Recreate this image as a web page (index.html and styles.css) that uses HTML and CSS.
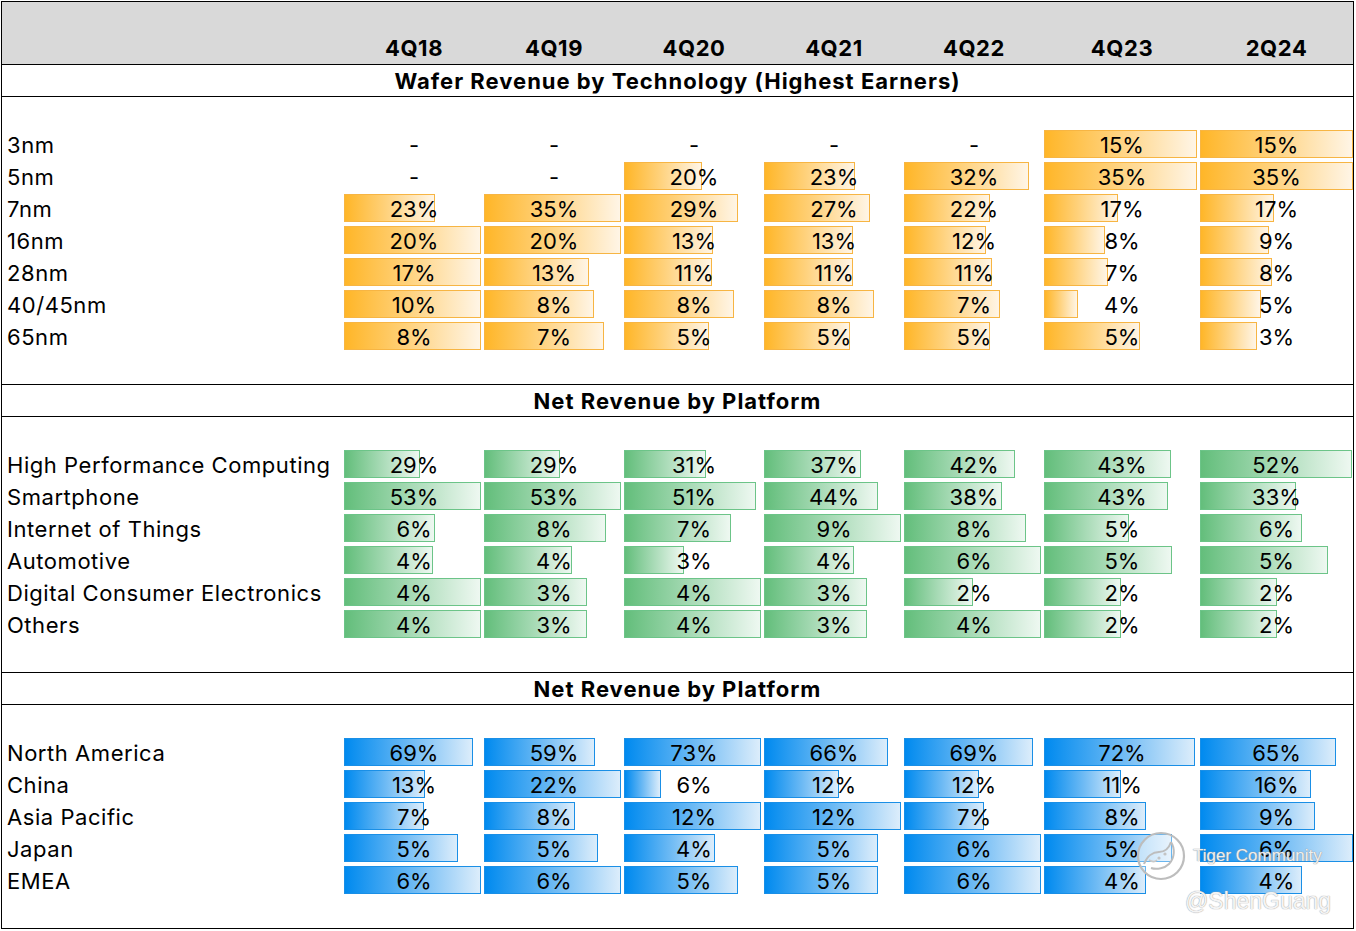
FILE: index.html
```html
<!DOCTYPE html>
<html>
<head>
<meta charset="utf-8">
<title>TSMC Revenue Mix</title>
<link rel="stylesheet" href="styles.css">
</head>
<body>
<div class="sheet">
  <div class="head">
    <div></div>
    <div class="hcell">4Q18</div><div class="hcell">4Q19</div><div class="hcell">4Q20</div><div class="hcell">4Q21</div><div class="hcell">4Q22</div><div class="hcell">4Q23</div><div class="hcell">2Q24</div>
  </div>

  <section class="section orange">
    <div class="title">Wafer Revenue by Technology (Highest Earners)</div>
    <div class="body">
      <div class="row"><div class="label">3nm</div>
        <div class="cell"><span class="val">-</span></div>
        <div class="cell"><span class="val">-</span></div>
        <div class="cell"><span class="val">-</span></div>
        <div class="cell"><span class="val">-</span></div>
        <div class="cell"><span class="val">-</span></div>
        <div class="cell"><span class="bar" style="width:153px"></span><span class="val">15%</span></div>
        <div class="cell"><span class="bar" style="width:153px"></span><span class="val">15%</span></div>
      </div>
      <div class="row"><div class="label">5nm</div>
        <div class="cell"><span class="val">-</span></div>
        <div class="cell"><span class="val">-</span></div>
        <div class="cell"><span class="bar" style="width:78px"></span><span class="val">20%</span></div>
        <div class="cell"><span class="bar" style="width:91px"></span><span class="val">23%</span></div>
        <div class="cell"><span class="bar" style="width:125px"></span><span class="val">32%</span></div>
        <div class="cell"><span class="bar" style="width:153px"></span><span class="val">35%</span></div>
        <div class="cell"><span class="bar" style="width:153px"></span><span class="val">35%</span></div>
      </div>
      <div class="row"><div class="label">7nm</div>
        <div class="cell"><span class="bar" style="width:91px"></span><span class="val">23%</span></div>
        <div class="cell"><span class="bar" style="width:137px"></span><span class="val">35%</span></div>
        <div class="cell"><span class="bar" style="width:114px"></span><span class="val">29%</span></div>
        <div class="cell"><span class="bar" style="width:106px"></span><span class="val">27%</span></div>
        <div class="cell"><span class="bar" style="width:86px"></span><span class="val">22%</span></div>
        <div class="cell"><span class="bar" style="width:74px"></span><span class="val">17%</span></div>
        <div class="cell"><span class="bar" style="width:74px"></span><span class="val">17%</span></div>
      </div>
      <div class="row"><div class="label">16nm</div>
        <div class="cell"><span class="bar" style="width:137px"></span><span class="val">20%</span></div>
        <div class="cell"><span class="bar" style="width:137px"></span><span class="val">20%</span></div>
        <div class="cell"><span class="bar" style="width:89px"></span><span class="val">13%</span></div>
        <div class="cell"><span class="bar" style="width:89px"></span><span class="val">13%</span></div>
        <div class="cell"><span class="bar" style="width:82px"></span><span class="val">12%</span></div>
        <div class="cell"><span class="bar" style="width:61px"></span><span class="val">8%</span></div>
        <div class="cell"><span class="bar" style="width:69px"></span><span class="val">9%</span></div>
      </div>
      <div class="row"><div class="label">28nm</div>
        <div class="cell"><span class="bar" style="width:137px"></span><span class="val">17%</span></div>
        <div class="cell"><span class="bar" style="width:105px"></span><span class="val">13%</span></div>
        <div class="cell"><span class="bar" style="width:88px"></span><span class="val">11%</span></div>
        <div class="cell"><span class="bar" style="width:89px"></span><span class="val">11%</span></div>
        <div class="cell"><span class="bar" style="width:88px"></span><span class="val">11%</span></div>
        <div class="cell"><span class="bar" style="width:64px"></span><span class="val">7%</span></div>
        <div class="cell"><span class="bar" style="width:72px"></span><span class="val">8%</span></div>
      </div>
      <div class="row"><div class="label">40/45nm</div>
        <div class="cell"><span class="bar" style="width:137px"></span><span class="val">10%</span></div>
        <div class="cell"><span class="bar" style="width:110px"></span><span class="val">8%</span></div>
        <div class="cell"><span class="bar" style="width:110px"></span><span class="val">8%</span></div>
        <div class="cell"><span class="bar" style="width:110px"></span><span class="val">8%</span></div>
        <div class="cell"><span class="bar" style="width:96px"></span><span class="val">7%</span></div>
        <div class="cell"><span class="bar" style="width:34px"></span><span class="val">4%</span></div>
        <div class="cell"><span class="bar" style="width:61px"></span><span class="val">5%</span></div>
      </div>
      <div class="row"><div class="label">65nm</div>
        <div class="cell"><span class="bar" style="width:137px"></span><span class="val">8%</span></div>
        <div class="cell"><span class="bar" style="width:120px"></span><span class="val">7%</span></div>
        <div class="cell"><span class="bar" style="width:85px"></span><span class="val">5%</span></div>
        <div class="cell"><span class="bar" style="width:86px"></span><span class="val">5%</span></div>
        <div class="cell"><span class="bar" style="width:86px"></span><span class="val">5%</span></div>
        <div class="cell"><span class="bar" style="width:96px"></span><span class="val">5%</span></div>
        <div class="cell"><span class="bar" style="width:57px"></span><span class="val">3%</span></div>
      </div>
    </div>
  </section>

  <section class="section green">
    <div class="title">Net Revenue by Platform</div>
    <div class="body">
      <div class="row"><div class="label">High Performance Computing</div>
        <div class="cell"><span class="bar" style="width:76px"></span><span class="val">29%</span></div>
        <div class="cell"><span class="bar" style="width:76px"></span><span class="val">29%</span></div>
        <div class="cell"><span class="bar" style="width:82px"></span><span class="val">31%</span></div>
        <div class="cell"><span class="bar" style="width:97px"></span><span class="val">37%</span></div>
        <div class="cell"><span class="bar" style="width:111px"></span><span class="val">42%</span></div>
        <div class="cell"><span class="bar" style="width:127px"></span><span class="val">43%</span></div>
        <div class="cell"><span class="bar" style="width:152px"></span><span class="val">52%</span></div>
      </div>
      <div class="row"><div class="label">Smartphone</div>
        <div class="cell"><span class="bar" style="width:137px"></span><span class="val">53%</span></div>
        <div class="cell"><span class="bar" style="width:137px"></span><span class="val">53%</span></div>
        <div class="cell"><span class="bar" style="width:132px"></span><span class="val">51%</span></div>
        <div class="cell"><span class="bar" style="width:114px"></span><span class="val">44%</span></div>
        <div class="cell"><span class="bar" style="width:98px"></span><span class="val">38%</span></div>
        <div class="cell"><span class="bar" style="width:124px"></span><span class="val">43%</span></div>
        <div class="cell"><span class="bar" style="width:96px"></span><span class="val">33%</span></div>
      </div>
      <div class="row"><div class="label">Internet of Things</div>
        <div class="cell"><span class="bar" style="width:91px"></span><span class="val">6%</span></div>
        <div class="cell"><span class="bar" style="width:122px"></span><span class="val">8%</span></div>
        <div class="cell"><span class="bar" style="width:107px"></span><span class="val">7%</span></div>
        <div class="cell"><span class="bar" style="width:137px"></span><span class="val">9%</span></div>
        <div class="cell"><span class="bar" style="width:122px"></span><span class="val">8%</span></div>
        <div class="cell"><span class="bar" style="width:85px"></span><span class="val">5%</span></div>
        <div class="cell"><span class="bar" style="width:102px"></span><span class="val">6%</span></div>
      </div>
      <div class="row"><div class="label">Automotive</div>
        <div class="cell"><span class="bar" style="width:89px"></span><span class="val">4%</span></div>
        <div class="cell"><span class="bar" style="width:88px"></span><span class="val">4%</span></div>
        <div class="cell"><span class="bar" style="width:60px"></span><span class="val">3%</span></div>
        <div class="cell"><span class="bar" style="width:90px"></span><span class="val">4%</span></div>
        <div class="cell"><span class="bar" style="width:137px"></span><span class="val">6%</span></div>
        <div class="cell"><span class="bar" style="width:128px"></span><span class="val">5%</span></div>
        <div class="cell"><span class="bar" style="width:128px"></span><span class="val">5%</span></div>
      </div>
      <div class="row"><div class="label">Digital Consumer Electronics</div>
        <div class="cell"><span class="bar" style="width:137px"></span><span class="val">4%</span></div>
        <div class="cell"><span class="bar" style="width:103px"></span><span class="val">3%</span></div>
        <div class="cell"><span class="bar" style="width:137px"></span><span class="val">4%</span></div>
        <div class="cell"><span class="bar" style="width:103px"></span><span class="val">3%</span></div>
        <div class="cell"><span class="bar" style="width:69px"></span><span class="val">2%</span></div>
        <div class="cell"><span class="bar" style="width:77px"></span><span class="val">2%</span></div>
        <div class="cell"><span class="bar" style="width:77px"></span><span class="val">2%</span></div>
      </div>
      <div class="row"><div class="label">Others</div>
        <div class="cell"><span class="bar" style="width:137px"></span><span class="val">4%</span></div>
        <div class="cell"><span class="bar" style="width:103px"></span><span class="val">3%</span></div>
        <div class="cell"><span class="bar" style="width:137px"></span><span class="val">4%</span></div>
        <div class="cell"><span class="bar" style="width:103px"></span><span class="val">3%</span></div>
        <div class="cell"><span class="bar" style="width:137px"></span><span class="val">4%</span></div>
        <div class="cell"><span class="bar" style="width:77px"></span><span class="val">2%</span></div>
        <div class="cell"><span class="bar" style="width:77px"></span><span class="val">2%</span></div>
      </div>
    </div>
  </section>

  <section class="section blue">
    <div class="title">Net Revenue by Platform</div>
    <div class="body">
      <div class="row"><div class="label">North America</div>
        <div class="cell"><span class="bar" style="width:129px"></span><span class="val">69%</span></div>
        <div class="cell"><span class="bar" style="width:111px"></span><span class="val">59%</span></div>
        <div class="cell"><span class="bar" style="width:137px"></span><span class="val">73%</span></div>
        <div class="cell"><span class="bar" style="width:124px"></span><span class="val">66%</span></div>
        <div class="cell"><span class="bar" style="width:129px"></span><span class="val">69%</span></div>
        <div class="cell"><span class="bar" style="width:151px"></span><span class="val">72%</span></div>
        <div class="cell"><span class="bar" style="width:136px"></span><span class="val">65%</span></div>
      </div>
      <div class="row"><div class="label">China</div>
        <div class="cell"><span class="bar" style="width:81px"></span><span class="val">13%</span></div>
        <div class="cell"><span class="bar" style="width:137px"></span><span class="val">22%</span></div>
        <div class="cell"><span class="bar" style="width:37px"></span><span class="val">6%</span></div>
        <div class="cell"><span class="bar" style="width:75px"></span><span class="val">12%</span></div>
        <div class="cell"><span class="bar" style="width:75px"></span><span class="val">12%</span></div>
        <div class="cell"><span class="bar" style="width:77px"></span><span class="val">11%</span></div>
        <div class="cell"><span class="bar" style="width:111px"></span><span class="val">16%</span></div>
      </div>
      <div class="row"><div class="label">Asia Pacific</div>
        <div class="cell"><span class="bar" style="width:80px"></span><span class="val">7%</span></div>
        <div class="cell"><span class="bar" style="width:91px"></span><span class="val">8%</span></div>
        <div class="cell"><span class="bar" style="width:137px"></span><span class="val">12%</span></div>
        <div class="cell"><span class="bar" style="width:137px"></span><span class="val">12%</span></div>
        <div class="cell"><span class="bar" style="width:80px"></span><span class="val">7%</span></div>
        <div class="cell"><span class="bar" style="width:102px"></span><span class="val">8%</span></div>
        <div class="cell"><span class="bar" style="width:115px"></span><span class="val">9%</span></div>
      </div>
      <div class="row"><div class="label">Japan</div>
        <div class="cell"><span class="bar" style="width:114px"></span><span class="val">5%</span></div>
        <div class="cell"><span class="bar" style="width:114px"></span><span class="val">5%</span></div>
        <div class="cell"><span class="bar" style="width:91px"></span><span class="val">4%</span></div>
        <div class="cell"><span class="bar" style="width:114px"></span><span class="val">5%</span></div>
        <div class="cell"><span class="bar" style="width:137px"></span><span class="val">6%</span></div>
        <div class="cell"><span class="bar" style="width:128px"></span><span class="val">5%</span></div>
        <div class="cell"><span class="bar" style="width:153px"></span><span class="val">6%</span></div>
      </div>
      <div class="row"><div class="label">EMEA</div>
        <div class="cell"><span class="bar" style="width:137px"></span><span class="val">6%</span></div>
        <div class="cell"><span class="bar" style="width:137px"></span><span class="val">6%</span></div>
        <div class="cell"><span class="bar" style="width:114px"></span><span class="val">5%</span></div>
        <div class="cell"><span class="bar" style="width:114px"></span><span class="val">5%</span></div>
        <div class="cell"><span class="bar" style="width:137px"></span><span class="val">6%</span></div>
        <div class="cell"><span class="bar" style="width:102px"></span><span class="val">4%</span></div>
        <div class="cell"><span class="bar" style="width:102px"></span><span class="val">4%</span></div>
      </div>
    </div>
  </section>

  <div class="watermark">
    <svg class="wm-logo" width="52" height="52" viewBox="0 0 52 52">
      <circle cx="26" cy="26" r="23" fill="rgba(255,255,255,0.35)" stroke="#bdbdbd" stroke-width="2.2"/>
      <path d="M9 34 C12 26 18 22 24 22 C30 22 34 18 36 12" fill="none" stroke="#bdbdbd" stroke-width="2"/>
      <path d="M36 12 C40 18 40 28 34 34 C30 38 22 40 16 38" fill="none" stroke="#bdbdbd" stroke-width="2"/>
      <path d="M14 30 C17 32 20 32 22 30" fill="none" stroke="#c8c8c8" stroke-width="1.6"/>
      <circle cx="24" cy="28" r="1.6" fill="#c4c4c4"/>
      <circle cx="30" cy="24" r="1.6" fill="#c4c4c4"/>
    </svg>
    <span class="wm-brand">Tiger Community</span>
    <span class="wm-user">@ShenGuang</span>
  </div>
</div>
</body>
</html>
```
FILE: styles.css
```css
:root {
  --cols: 342px 140px 140px 140px 140px 140px 156px 153px;
}

html, body {
  margin: 0;
  padding: 0;
  background: #ffffff;
}

body {
  font-family: Inter, "Liberation Sans", Arial, sans-serif;
  color: #000000;
}

.sheet {
  position: relative;
  margin: 1px 0 0 1px;
  width: 1353px;
  height: 928px;
  box-sizing: border-box;
  border: 1px solid #000000;
  overflow: hidden;
}

.head {
  height: 63px;
  box-sizing: border-box;
  background: #d9d9d9;
  border-bottom: 1px solid #000000;
  display: grid;
  grid-template-columns: var(--cols);
  align-items: end;
}

.hcell {
  text-align: center;
  font-weight: 700;
  font-size: 22px;
  letter-spacing: 0.6px;
  line-height: 32px;
  padding-top: 2px;
}

.section {
  border-bottom: 1px solid #000000;
}

.section:last-of-type {
  border-bottom: none;
}

.title {
  height: 32px;
  box-sizing: border-box;
  border-bottom: 1px solid #000000;
  text-align: center;
  font-weight: 700;
  font-size: 22px;
  letter-spacing: 1px;
  line-height: 31px;
  padding-top: 1px;
}

.body {
  padding: 32px 0 31px;
}

.row {
  display: grid;
  grid-template-columns: var(--cols);
  height: 32px;
}

.label {
  padding: 0 0 0 5px;
  font-size: 22px;
  letter-spacing: 0.55px;
  line-height: 32px;
  white-space: nowrap;
}

.cell {
  display: grid;
  height: 32px;
}

.bar,
.val {
  grid-area: 1 / 1;
}

.bar {
  justify-self: start;
  align-self: start;
  margin-top: 1px;
  height: 28px;
  box-sizing: border-box;
  border: 1px solid;
}

.val {
  justify-self: center;
  align-self: center;
  font-size: 22px;
  line-height: 32px;
  position: relative;
}

.orange .bar {
  border-color: #f7b543;
  background: linear-gradient(to right, #ffb628 0%, #ffd17a 45%, #fff5e6 100%);
}

.green .bar {
  border-color: #6cc488;
  background: linear-gradient(to right, #63be7b 0%, #a9dbb7 50%, #eef8f1 100%);
}

.blue .bar {
  border-color: #1a8fe6;
  background: linear-gradient(to right, #008aef 0%, #6bb9f4 50%, #dcedfb 100%);
}

.watermark {
  position: absolute;
  left: 1133px;
  top: 828px;
  width: 210px;
  height: 95px;
  pointer-events: none;
}

.wm-logo {
  position: absolute;
  left: 0;
  top: 0;
}

.wm-brand {
  position: absolute;
  left: 58px;
  top: 16px;
  font-family: "Liberation Sans", Arial, sans-serif;
  font-size: 17px;
  color: rgba(255, 255, 255, 0.85);
  text-shadow: 0 0 1px #9a9a9a, 0 0 1px #9a9a9a;
  white-space: nowrap;
}

.wm-user {
  position: absolute;
  left: 50px;
  top: 58px;
  font-family: "Liberation Sans", Arial, sans-serif;
  font-size: 23px;
  color: rgba(255, 255, 255, 0.9);
  text-shadow: 0 0 1px #a8a8a8, 0 0 1px #a8a8a8;
  white-space: nowrap;
}
```
